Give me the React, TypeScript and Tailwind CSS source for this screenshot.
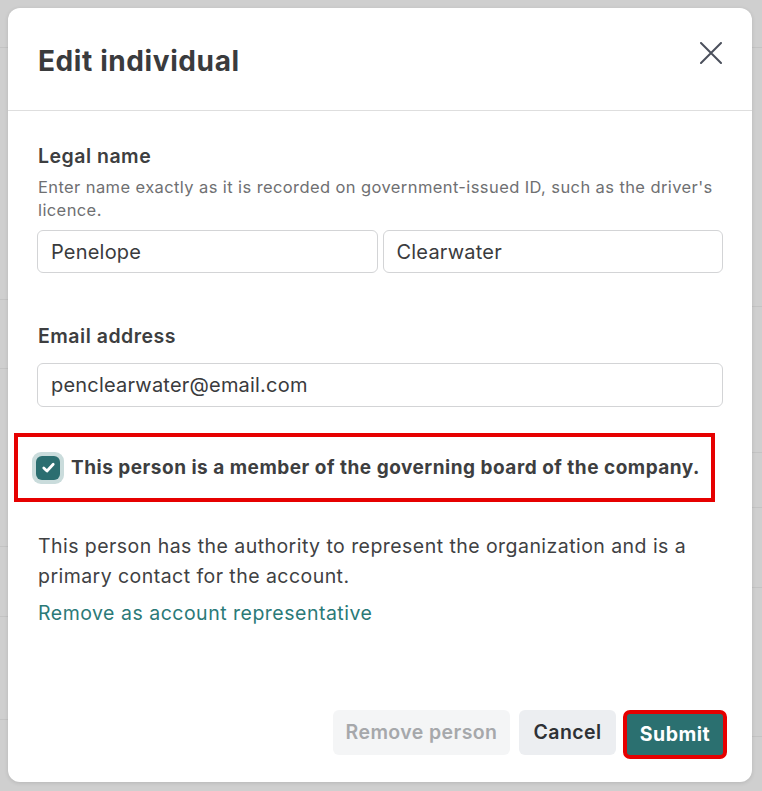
import React from "react";

const leftRows = [48, 252, 69, 178, 70, 103];
const rightRows = [48, 259, 146, 55, 80, 149];

function Backdrop() {
  return (
    <div className="flex h-[791px] w-[762px] bg-[#cfcfcf]">
      <div className="flex w-[381px] flex-col">
        {leftRows.map((h, i) => (
          <div key={i} className="border-b border-[#c3c3c3]" style={{ height: h }} />
        ))}
      </div>
      <div className="flex w-[381px] flex-col">
        {rightRows.map((h, i) => (
          <div key={i} className="border-b border-[#c3c3c3]" style={{ height: h }} />
        ))}
      </div>
    </div>
  );
}

function CloseIcon() {
  return (
    <svg width="22" height="22" viewBox="0 0 22 22" fill="none">
      <path d="M1 1L21 21M21 1L1 21" stroke="#4b505c" strokeWidth="2" strokeLinecap="round" />
    </svg>
  );
}

function Check() {
  return (
    <div className="flex h-[32px] w-[32px] shrink-0 items-center justify-center rounded-[9px] bg-[#cadcdc]">
      <div className="flex h-[24px] w-[24px] items-center justify-center rounded-[6px] bg-[#2b6e70]">
        <svg width="15" height="15" viewBox="0 0 14 14" fill="none">
          <path d="M2.6 7.4L5.6 10.2L11.4 4" stroke="#ffffff" strokeWidth="2.6" strokeLinecap="round" strokeLinejoin="round" />
        </svg>
      </div>
    </div>
  );
}

export default function App() {
  return (
    <div className="relative h-[791px] w-[762px] overflow-hidden font-['Inter',sans-serif]">
      <Backdrop />
      <div className="absolute left-[8px] top-[8px] flex h-[774px] w-[744px] flex-col rounded-[12px] bg-white shadow-[0_1px_4px_rgba(0,0,0,0.12)]">
        <div className="flex h-[103px] shrink-0 items-start justify-between border-b border-[#dedede] pl-[30px] pr-[30px] pt-[34px]">
          <h1 className="mt-[1px] text-[28px] font-bold leading-[36px] tracking-[0.6px] text-[#3a3b3d]">Edit individual</h1>
          <button className="flex h-[22px] w-[22px] items-center justify-center">
            <CloseIcon />
          </button>
        </div>

        <div className="flex flex-1 flex-col px-[29px] pt-[32px]">
          <div className="pl-[1px] text-[19.5px] font-semibold leading-[26px] tracking-[0.5px] text-[#3d3e40]">Legal name</div>
          <p className="mt-[7px] pl-[1px] text-[16.5px] leading-[23px] tracking-[0.4px] text-[#6f7072]">
            Enter name exactly as it is recorded on government-issued ID, such as the driver's licence.
          </p>
          <div className="mt-[8px] flex gap-[5px]">
            <div className="flex h-[43px] flex-1 items-center rounded-[6px] border border-[#d3d4d6] px-[13px] text-[20px] leading-[24px] tracking-[0.2px] text-[#3a3b3d]">
              Penelope
            </div>
            <div className="flex h-[43px] flex-1 items-center rounded-[6px] border border-[#d3d4d6] px-[13px] text-[20px] leading-[24px] tracking-[0.2px] text-[#3a3b3d]">
              Clearwater
            </div>
          </div>

          <div className="mt-[50px] pl-[1px] text-[19.5px] font-semibold leading-[26px] tracking-[0.5px] text-[#3d3e40]">Email address</div>
          <div className="mt-[14px] flex h-[44px] items-center rounded-[6px] border border-[#d3d4d6] px-[13px] text-[20px] leading-[24px] tracking-[0.2px] text-[#3a3b3d]">
            penclearwater@email.com
          </div>

          <div className="-ml-[23px] mr-[8px] mt-[26px] flex h-[69px] items-center gap-[7px] border-4 border-[#e60000] pl-[14px]">
            <Check />
            <span className="text-[19px] font-bold leading-[24px] tracking-[0.5px] text-[#3d3e40]">
              This person is a member of the governing board of the company.
            </span>
          </div>

          <p className="mt-[29px] pl-[1px] text-[19.5px] leading-[30px] tracking-[0.45px] text-[#404143]">
            This person has the authority to represent the organization and is a primary contact for the account.
          </p>
          <a className="mt-[7px] pl-[1px] text-[19.5px] leading-[30px] tracking-[0.5px] text-[#2b7a78]">Remove as account representative</a>

          <div className="mb-[23px] mr-[-4px] mt-auto flex items-start justify-end">
            <button className="flex h-[45px] w-[177px] items-center justify-center rounded-[6px] bg-[#f4f5f6] text-[19.5px] font-semibold tracking-[0.4px] text-[#a6a8ab]">
              Remove person
            </button>
            <button className="ml-[9px] flex h-[45px] w-[97px] items-center justify-center rounded-[6px] bg-[#eceef1] text-[19.5px] font-semibold tracking-[0.4px] text-[#2e3135]">
              Cancel
            </button>
            <button className="ml-[7px] flex h-[49px] w-[104px] items-center justify-center rounded-[7px] border-4 border-[#e60000] bg-[#2b7070] text-[19.5px] font-bold tracking-[0.5px] text-white">
              Submit
            </button>
          </div>
        </div>
      </div>
    </div>
  );
}
